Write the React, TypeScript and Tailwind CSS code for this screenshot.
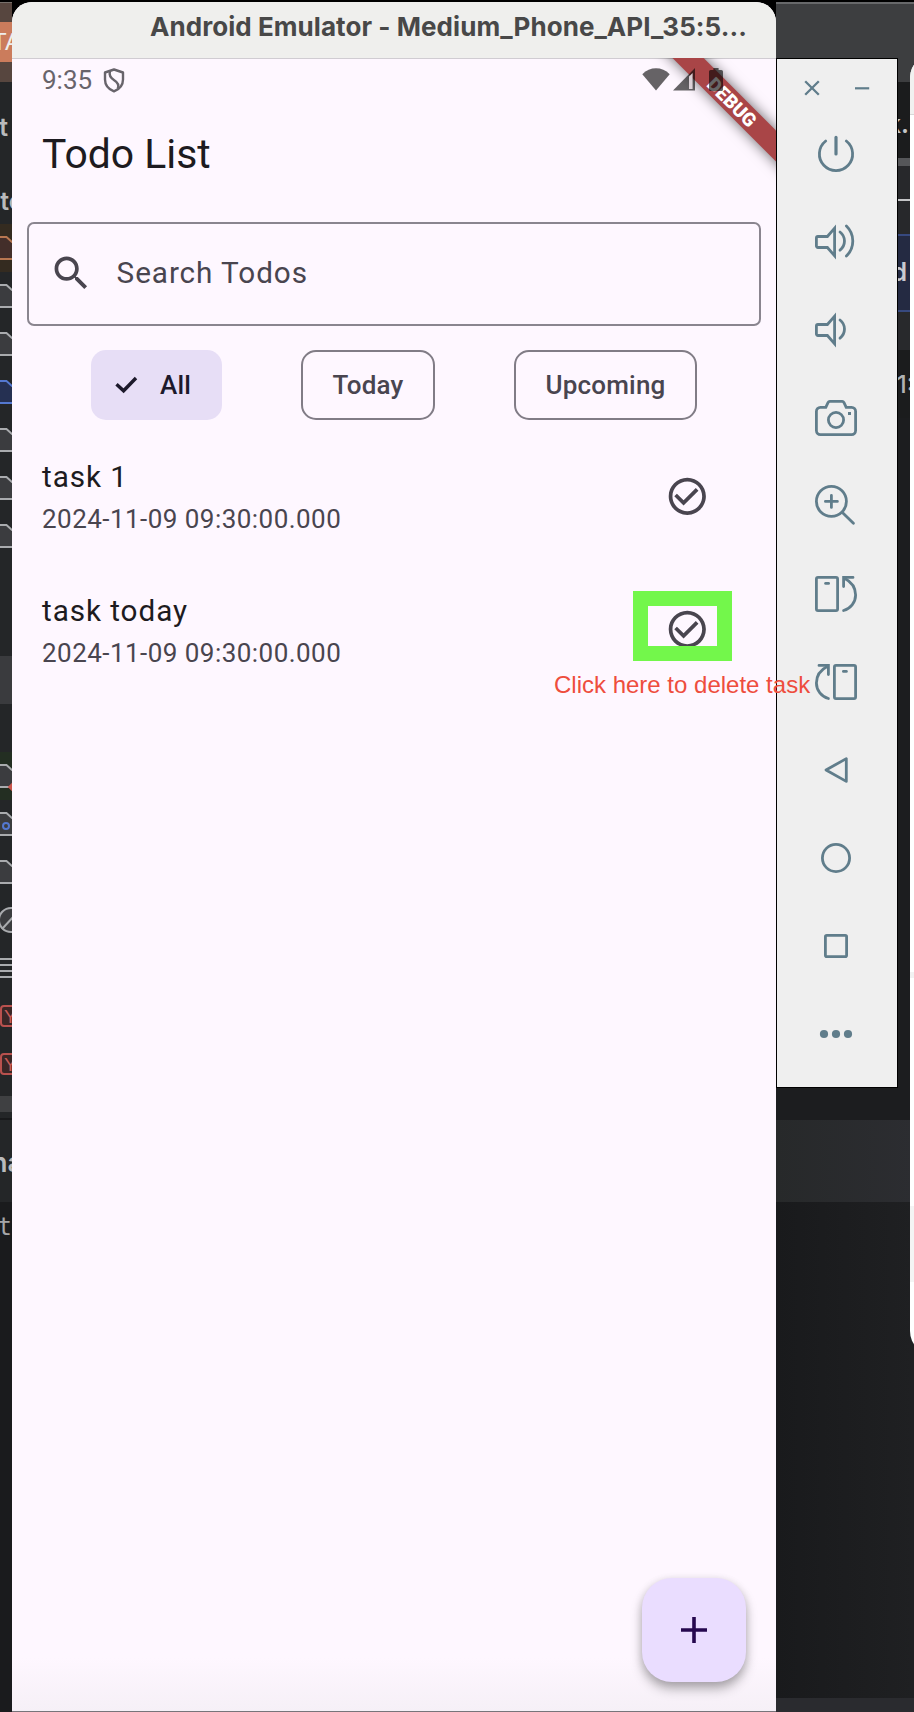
import React from "react";

type IconProps = { children: React.ReactNode };

function ToolIcon({ children }: IconProps) {
  return (
    <div className="flex h-[88px] w-[118px] items-center justify-center">
      <svg width="48" height="48" viewBox="0 0 48 48" fill="none" stroke="#607d8b" strokeWidth="2.8">
        {children}
      </svg>
    </div>
  );
}

function Speaker() {
  return (
    <>
      <path d="M5.9 18.5H15.4L22.6 10.2V37.8L15.4 29.5H5.9A1.5 1.5 0 0 1 4.4 28V20A1.5 1.5 0 0 1 5.9 18.5Z" />
      <path d="M28 14A11.5 11.5 0 0 1 28 32.2" strokeLinecap="round" />
    </>
  );
}

function RotateShape() {
  return (
    <>
      <rect x="4.4" y="7.4" width="21.2" height="33.2" rx="1.6" />
      <path d="M13.6 13.4H16.6" strokeLinecap="round" />
      <path d="M41 7.4H31.6V16.6" strokeLinecap="round" />
      <path d="M32.4 8.2C39.5 11.8 43.6 18 43.6 25C43.6 32.4 38.4 38.6 31.6 40.5" strokeLinecap="round" />
    </>
  );
}

function Toolbar() {
  return (
    <div className="mt-[58px] flex h-[1030px] w-[122px] shrink-0 flex-col border border-black bg-[#efefef]">
      <div className="flex h-[51px] items-start pl-[27px] pt-[21px]">
        <svg width="16" height="16" viewBox="0 0 16 16" stroke="#607d8b" strokeWidth="2.3">
          <path d="M1.2 1.2L14.8 14.8M14.8 1.2L1.2 14.8" />
        </svg>
        <svg className="ml-[35px]" width="16" height="16" viewBox="0 0 16 16" stroke="#607d8b" strokeWidth="2.2">
          <path d="M0 8.3H14.2" />
        </svg>
      </div>
      <ToolIcon>
        <path d="M34.3 11A16.6 16.6 0 1 1 13.7 11" strokeLinecap="round" />
        <path d="M24 7.4V24" strokeLinecap="round" strokeWidth="3.2" />
      </ToolIcon>
      <ToolIcon>
        <Speaker />
        <path d="M34.4 8A20.8 20.8 0 0 1 34.4 38" strokeLinecap="round" />
      </ToolIcon>
      <ToolIcon>
        <Speaker />
      </ToolIcon>
      <ToolIcon>
        <path d="M8.4 13.4H13.8L16 8.6Q16.6 7.4 17.8 7.4H30.2Q31.4 7.4 32 8.6L34.2 13.4H39.6A4 4 0 0 1 43.6 17.4V36.6A4 4 0 0 1 39.6 40.6H8.4A4 4 0 0 1 4.4 36.6V17.4A4 4 0 0 1 8.4 13.4Z" />
        <circle cx="24" cy="26" r="7.6" />
        <rect x="36" y="18" width="3" height="3" fill="#607d8b" stroke="none" />
      </ToolIcon>
      <ToolIcon>
        <circle cx="19.4" cy="19.4" r="15" />
        <path d="M19.4 13.4V25.4M13.4 19.4H25.4M30.4 30.4L41.4 41.2" strokeLinecap="round" />
      </ToolIcon>
      <ToolIcon>
        <RotateShape />
      </ToolIcon>
      <ToolIcon>
        <g transform="translate(48 0) scale(-1 1)">
          <RotateShape />
        </g>
      </ToolIcon>
      <ToolIcon>
        <path d="M14 24L34.3 12.6V35.4Z" strokeLinejoin="round" />
      </ToolIcon>
      <ToolIcon>
        <circle cx="24" cy="24" r="13.6" />
      </ToolIcon>
      <ToolIcon>
        <rect x="13.4" y="13.4" width="21.2" height="21.2" rx="1.4" />
      </ToolIcon>
      <ToolIcon>
        <g fill="#607d8b" stroke="none">
          <circle cx="12" cy="24" r="4.1" />
          <circle cx="24" cy="24" r="4.1" />
          <circle cx="36" cy="24" r="4.1" />
        </g>
      </ToolIcon>
    </div>
  );
}

function Folder({ line, fill, bg }: { line: string; fill: string; bg?: string }) {
  return (
    <div className="flex h-[48px] w-[12px] shrink-0 items-center" style={{ background: bg }}>
      <svg width="12" height="26" viewBox="0 0 12 26">
        <path d="M-2 2H6.5L12 7H14V24H-2Z" fill={fill} stroke={line} strokeWidth="2" />
      </svg>
    </div>
  );
}

function YamlBadge() {
  return (
    <div className="flex h-[48px] w-[12px] shrink-0 items-center">
      <div className="flex h-[22px] w-[26px] shrink-0 items-center rounded-[4px] border-2 border-[#b9514e] bg-[#3a2626] pl-[2px] font-['Liberation_Sans'] text-[19px] leading-none text-[#c75a57]">
        Y
      </div>
    </div>
  );
}

function LeftDesktop() {
  return (
    <div className="flex h-[1712px] w-[12px] shrink-0 flex-col overflow-hidden bg-[#242628]">
      <div className="h-[2px] shrink-0 bg-black" />
      <div className="h-[80px] shrink-0 overflow-hidden border-t border-[#77706b] bg-[#57463f] pt-[19px]">
        <div className="flex h-[40px] items-center bg-[#cb7c5c] font-['Liberation_Sans'] text-[24px] text-[#eee]">
          <span className="-ml-[8px] whitespace-nowrap">TA</span>
        </div>
      </div>
      <div className="flex h-[142px] shrink-0 flex-col items-end font-['Inter'] text-[25px] font-semibold leading-[30px] text-[#b9babc]">
        <span className="mr-[4px] mt-[30px]">t</span>
        <span className="-mr-[12px] mt-[44px]">to</span>
      </div>
      <Folder line="#b87751" fill="#432e2a" bg="#342b20" />
      <Folder line="#a9abae" fill="#3b3c3f" />
      <Folder line="#a9abae" fill="#3b3c3f" />
      <Folder line="#5478d0" fill="#253052" />
      <Folder line="#a9abae" fill="#3b3c3f" />
      <Folder line="#a9abae" fill="#3b3c3f" />
      <Folder line="#a9abae" fill="#3b3c3f" />
      <div className="mt-[96px] h-[48px] shrink-0 bg-[#3a3b3e]" />
      <div className="relative mt-[48px] h-[48px] shrink-0 overflow-hidden">
        <Folder line="#a9abae" fill="#3b3c3f" bg="#232e22" />
        <div className="absolute left-[9px] top-[32px] h-[6px] w-[6px] rotate-45 bg-[#c9544c]" />
      </div>
      <div className="relative h-[48px] shrink-0">
        <Folder line="#a9abae" fill="#3b3c3f" />
        <div className="absolute left-[2px] top-[22px] h-[8px] w-[8px] rounded-full border-2 border-[#5478d0]" />
      </div>
      <Folder line="#a9abae" fill="#3b3c3f" />
      <svg className="shrink-0" width="12" height="48" viewBox="0 0 12 48" fill="#3b3c3f" stroke="#a9abae" strokeWidth="2">
        <circle cx="11" cy="24" r="12" />
        <path d="M2 33L14 20" />
      </svg>
      <div className="flex h-[48px] shrink-0 flex-col justify-center gap-[4px]">
        <div className="h-[2px] bg-[#a9abae]" />
        <div className="h-[2px] bg-[#a9abae]" />
        <div className="h-[2px] bg-[#a9abae]" />
        <div className="h-[2px] bg-[#a9abae]" />
      </div>
      <YamlBadge />
      <YamlBadge />
      <div className="mt-[8px] h-[16px] shrink-0 bg-[#3f4042]" />
      <div className="mt-[6px] h-[2px] shrink-0 bg-[#18191b]" />
      <div className="flex h-[82px] shrink-0 items-center justify-end pt-[4px] font-['Inter'] text-[27px] font-semibold text-[#b9babc]">
        <span className="-mr-[11px]">na</span>
      </div>
      <div className="flex flex-1 items-start justify-end bg-[#1a1b1d] pt-[7px] font-['DejaVu_Sans_Mono'] text-[24px] text-[#a5a6a8]">
        t
      </div>
    </div>
  );
}

function RightDesktop() {
  return (
    <div className="flex h-[1712px] w-[138px] shrink-0 flex-col bg-[#1d1e20]">
      <div className="h-[2px] shrink-0 bg-black" />
      <div className="h-[80px] shrink-0 border-t-2 border-[#67686a] bg-[#3d3e40]" />
      <div className="flex h-[76px] shrink-0 items-center justify-end bg-[#1b1c1d] pr-[5px] pt-[10px] font-['Inter'] text-[25px] font-semibold text-[#c4c5c7]">
        k.
      </div>
      <div className="h-[8px] shrink-0 bg-[#555659]" />
      <div className="h-[33px] shrink-0 bg-[#27282b]" />
      <div className="h-[2px] shrink-0 bg-[#c4c5c7]" />
      <div className="h-[33px] shrink-0 bg-[#27282b]" />
      <div className="flex h-[78px] shrink-0 items-center justify-end border-y-2 border-[#37497f] bg-[#242a42] pr-[7px] font-['Inter'] text-[25px] font-semibold text-[#c9cad0]">
        d
      </div>
      <div className="h-[38px] shrink-0 bg-[#28292c]" />
      <div className="flex h-[68px] shrink-0 items-center justify-end bg-[#1b1c1d] pt-[2px] font-['Inter'] text-[24px] font-medium text-[#b0b1b3]">
        1:
      </div>
      <div className="flex-1 bg-[#1c1d1f]" />
      <div className="h-[82px] shrink-0 bg-linear-to-r from-[#27292a] to-[#2c2d31]" />
      <div className="h-[496px] shrink-0 bg-linear-to-r from-[#191a1c] to-[#1f2022]" />
      <div className="h-[14px] shrink-0 bg-[#2a2b2f]" />
    </div>
  );
}

function CheckCircle() {
  return (
    <svg className="h-[44.6px] w-[44.6px]" viewBox="0 0 24 24" fill="#49454f">
      <path d="M16.59 7.58L10 14.17l-3.59-3.58L5 12l5 5 8-8zM12 2C6.48 2 2 6.48 2 12s4.48 10 10 10 10-4.48 10-10S17.52 2 12 2zm0 18c-4.42 0-8-3.58-8-8s3.58-8 8-8 8 3.58 8 8-3.58 8-8 8z" />
    </svg>
  );
}

function Task({ title, date }: { title: string; date: string }) {
  return (
    <div className="flex h-[133.8px] shrink-0 items-start justify-between pl-[30px] pr-[66.5px] pt-[25px]">
      <div className="flex flex-col leading-[43px]">
        <span className="text-[29.7px] tracking-[0.93px] text-[#1d1b20]">{title}</span>
        <span className="text-[26px] tracking-[0.46px] text-[#49454f]">{date}</span>
      </div>
      <div className="mt-[18.7px]">
        <CheckCircle />
      </div>
    </div>
  );
}

function Phone() {
  return (
    <div className="relative mt-[2px] flex h-[1710px] w-[764px] shrink-0 flex-col overflow-hidden rounded-t-[20px] border-b border-[#77747a] bg-[#fef7ff] font-['Roboto',sans-serif]">
      <div className="flex h-[57px] shrink-0 items-center border-b border-[#d0ccd2] bg-[#efefed] pb-[7px] pl-[138px] font-['Inter',sans-serif] text-[26px] font-bold tracking-[0.06px] text-[#484848]">
        <span className="whitespace-nowrap">Android Emulator - Medium_Phone_API_35:5...</span>
      </div>
      <div className="absolute inset-x-0 bottom-0 top-[56px] overflow-hidden">
        <div className="absolute left-[589.5px] top-[33px] flex h-[22.3px] w-[260px] rotate-45 items-center justify-center bg-[#a94547] text-[19px] font-black leading-none text-white shadow-[0_0_14px_rgba(0,0,0,0.6)]">
          DEBUG
        </div>
      </div>
      <div className="relative flex h-[42px] shrink-0 items-center pl-[30px] text-[26px] text-[#68646b]">
        <span>9:35</span>
        <svg className="ml-[11px] mt-[1px]" width="22" height="25" viewBox="0 0 22 25" fill="none" stroke="#68646b" strokeWidth="2.4">
          <path d="M11 1.5L20 4.5V11.5C20 17 16 21.4 11 23.4C6 21.4 2 17 2 11.5V4.5Z" strokeLinejoin="round" />
          <path d="M7 3.4C5.6 8 8 10.2 11.2 12.2C14.6 14.3 16.4 16.6 14.8 20.4" />
        </svg>
        <svg className="absolute left-[630px] top-[9px]" width="84" height="24" viewBox="0 0 84 24" fill="#000" fillOpacity="0.6">
          <path d="M0.3 6.2C8-1.6 20-1.6 27.7 6.2L14 22.6Z" />
          <path d="M53 0V22.6H31L53 0Z" />
          <path d="M47 8.4L50.6 5V21H47Z" fill="#eadfe6" fillOpacity="0.9" />
          <path d="M71.4 0H76.6V2H79.4Q81 2 81 3.6V21.4Q81 23 79.4 23H68.6Q67 23 67 21.4V3.6Q67 2 68.6 2H71.4Z" />
        </svg>
      </div>
      <div className="flex h-[105px] shrink-0 items-center pl-[30px] pt-[2px] text-[40.9px] text-[#1d1b20]">Todo List</div>
      <div className="ml-[15px] mt-[15.5px] flex h-[104px] w-[734px] shrink-0 items-center rounded-[7px] border-2 border-[#8a858f] pl-[20px]">
        <svg className="h-[44.6px] w-[44.6px]" viewBox="0 0 24 24" fill="#49454f">
          <path d="M15.5 14h-.79l-.28-.27C15.41 12.59 16 11.11 16 9.5 16 5.91 13.09 3 9.5 3S3 5.91 3 9.5 5.91 16 9.5 16c1.61 0 3.09-.59 4.23-1.57l.27.28v.79l5 4.99L20.49 19l-4.99-5zm-6 0C7.01 14 5 11.99 5 9.5S7.01 5 9.5 5 14 7.01 14 9.5 11.99 14 9.5 14z" />
        </svg>
        <span className="ml-[23px] text-[29.7px] tracking-[0.93px] text-[#49454f]">Search Todos</span>
      </div>
      <div className="mt-[24.5px] flex h-[70px] shrink-0 pl-[79px] text-[26px] font-medium tracking-[0.19px] text-[#49454f]">
        <div className="flex w-[131px] items-center rounded-[15px] bg-[#e7def6] pl-[24px] text-[#1d192b]">
          <svg width="23" height="18" viewBox="0 0 23 18" fill="none" stroke="#1d192b" strokeWidth="3.4">
            <path d="M1.5 8.2L8.6 14.8L21 2" />
          </svg>
          <span className="ml-[22px]">All</span>
        </div>
        <div className="ml-[79px] flex w-[134px] items-center justify-center rounded-[15px] border-2 border-[#817c86]">Today</div>
        <div className="ml-[79px] flex w-[183px] items-center justify-center rounded-[15px] border-2 border-[#817c86]">Upcoming</div>
      </div>
      <div className="mt-[10px] flex flex-col">
        <Task title="task 1" date="2024-11-09 09:30:00.000" />
        <Task title="task today" date="2024-11-09 09:30:00.000" />
      </div>
      <div className="flex-1" />
      <div className="flex shrink-0 justify-end bg-linear-to-t from-[#f6f0f7] to-[#fef7ff] to-40% pb-[29px] pr-[30px]">
        <button className="flex h-[104px] w-[104px] items-center justify-center rounded-[30px] bg-[#eaddff] shadow-[0_7px_12px_rgba(0,0,0,0.28),0_2px_8px_rgba(0,0,0,0.12)]">
          <svg width="28" height="28" viewBox="0 0 28 28" stroke="#26084f" strokeWidth="3.6">
            <path d="M14 1V27M1 14H27" />
          </svg>
        </button>
      </div>
    </div>
  );
}

export default function App() {
  return (
    <div className="relative flex h-[1712px] w-[914px] overflow-hidden bg-black">
      <LeftDesktop />
      <Phone />
      <div className="relative w-[138px] shrink-0">
        <RightDesktop />
        <div className="absolute left-0 top-0">
          <Toolbar />
        </div>
        <div className="absolute left-[134px] top-[54px] flex h-[1301px] w-[60px] flex-col overflow-hidden rounded-[24px] bg-white">
          <div className="h-[61px] shrink-0 border-b border-[#d8d8d8] bg-[#f1f1f0]" />
          <div className="mt-[857px] h-[6px] shrink-0 bg-[#f2f2f2]" />
          <div className="mt-[228px] h-[76px] shrink-0 bg-[#f4f4f4]" />
        </div>
      </div>
      <div className="absolute left-[633px] top-[591px] h-[70px] w-[99px] border-[15px] border-[#73f74b]" />
      <div className="absolute left-[554px] top-[671px] whitespace-nowrap font-['Liberation_Sans',sans-serif] text-[24px] leading-[28px] text-[#ee4d3d]">
        Click here to delete task
      </div>
    </div>
  );
}
